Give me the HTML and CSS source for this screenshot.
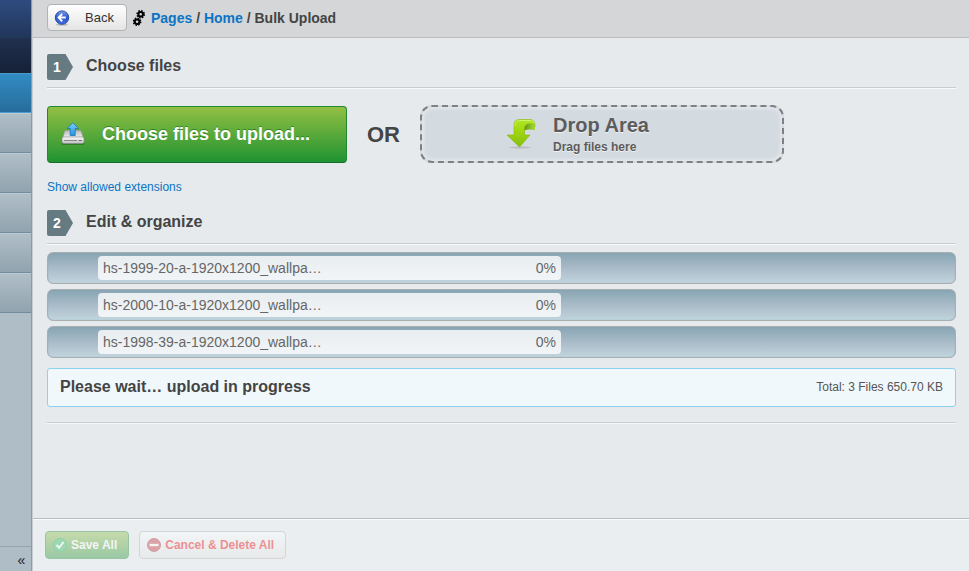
FILE: index.html
```html
<!DOCTYPE html>
<html lang="en">
<head>
<meta charset="utf-8">
<title>Bulk Upload</title>
<link rel="stylesheet" href="styles.css">
</head>
<body>
<div class="app">
  <nav class="sidebar" aria-label="Main">
    <div class="brand"></div>
    <div class="account"></div>
    <a class="nav-item active" href="#" aria-label="Section 1"></a>
    <a class="nav-item" href="#" aria-label="Section 2"></a>
    <a class="nav-item" href="#" aria-label="Section 3"></a>
    <a class="nav-item" href="#" aria-label="Section 4"></a>
    <a class="nav-item" href="#" aria-label="Section 5"></a>
    <a class="nav-item" href="#" aria-label="Section 6"></a>
    <button class="collapse" type="button">«</button>
  </nav>
  <div class="page">
    <header class="topbar">
      <button class="button back" type="button">
        <svg width="16" height="16" viewBox="0 0 16 16" aria-hidden="true">
          <defs><linearGradient id="blue" x1="0" y1="0" x2="0" y2="1"><stop offset="0" stop-color="#7da0ee"/><stop offset=".5" stop-color="#2c57c8"/><stop offset="1" stop-color="#456fe0"/></linearGradient></defs>
          <ellipse cx="8" cy="14.5" rx="6" ry="1.3" fill="#000" opacity=".2"/>
          <circle cx="8" cy="7.6" r="6.7" fill="url(#blue)" stroke="#2a49ad"/>
          <path d="M8.2 4 4.6 7.6l3.6 3.6M5 7.6h6.8" fill="none" stroke="#fff" stroke-width="2"/>
        </svg>
        <span>Back</span>
      </button>
      <svg class="gears" width="12" height="16" viewBox="0 0 12 16" aria-hidden="true">
        <g fill="none" stroke="#000">
          <circle cx="7.7" cy="4.3" r="2.3" stroke-width="2"/>
          <circle cx="7.7" cy="4.3" r="3.6" stroke-width="1.5" stroke-dasharray="1.5 1.33"/>
          <circle cx="4.1" cy="11.7" r="2.3" stroke-width="2"/>
          <circle cx="4.1" cy="11.7" r="3.6" stroke-width="1.5" stroke-dasharray="1.5 1.33"/>
        </g>
      </svg>
      <div class="crumbs"><a href="#">Pages</a> / <a href="#">Home</a> / Bulk Upload</div>
    </header>
    <main class="content">
      <h2 class="step">
        <span class="step-no"><svg width="26" height="26" viewBox="0 0 26 26" aria-hidden="true"><path d="M2 0h16.5L26 13l-7.500 13H2a2 2 0 0 1-2-2V2a2 2 0 0 1 2-2z" fill="#667a82"/></svg><b>1</b></span>
        <span>Choose files</span>
      </h2>
      <div class="choose">
        <button class="upload" type="button">
          <svg width="24" height="24" viewBox="0 0 24 24" aria-hidden="true">
            <defs>
              <linearGradient id="tray" x1="0" y1="0" x2="0" y2="1"><stop offset="0" stop-color="#b9babd"/><stop offset="1" stop-color="#f2f2f2"/></linearGradient>
              <linearGradient id="front" x1="0" y1="0" x2="0" y2="1"><stop offset="0" stop-color="#fff"/><stop offset="1" stop-color="#bdbdbf"/></linearGradient>
              <linearGradient id="up" x1="0" y1="0" x2="0" y2="1"><stop offset="0" stop-color="#7fd0ff"/><stop offset="1" stop-color="#2493e0"/></linearGradient>
            </defs>
            <path d="M2 21.500h20" stroke="#164d17" stroke-width="3" stroke-linecap="round" opacity=".4"/>
            <path d="M5 8.500h14q1 0 1.300 1l2 6.500H1.700l2-6.500q.3-1 1.300-1z" fill="url(#tray)" stroke="#9a9a9a" stroke-width=".7"/>
            <rect x="1" y="15" width="22" height="6.500" rx="1.800" fill="url(#front)" stroke="#8d8d8d" stroke-width=".7"/>
            <path d="M3 18.500h13" stroke="#8a8a8a"/><path d="M17.500 18.500h3.500" stroke="#777"/>
            <path d="M11.800.8 6 6.500h3.200v7h5v-7h3.300z" fill="url(#up)" stroke="#1676b8" stroke-width=".8"/>
          </svg>
          <span>Choose files to upload...</span>
        </button>
        <div class="or">OR</div>
        <div class="drop">
          <svg width="32" height="32" viewBox="0 0 32 32" aria-hidden="true">
            <defs>
              <linearGradient id="green" x1="0" y1="0" x2="0" y2="1"><stop offset="0" stop-color="#b1e829"/><stop offset=".4" stop-color="#a1d70c"/><stop offset="1" stop-color="#86bd12"/></linearGradient>
              <linearGradient id="fold" x1="0" y1="0" x2="1" y2="0"><stop offset="0" stop-color="#5d8f0c"/><stop offset="1" stop-color="#a9dd3c"/></linearGradient>
            </defs>
            <ellipse cx="15" cy="29.500" rx="11" ry="1.200" fill="#000" opacity=".12"/>
            <path d="M18.500 13V8l4-4 6 1.500 1.500 3v3.700c-3-1-8-1.300-11.500.8z" fill="url(#fold)"/>
            <path d="M9 17V7c0-3.500 2-5.500 5.500-5.500H25c3.300 0 5 2.500 5 7-1.500-2.200-3.300-2.800-5.500-2.800-3.500 0-5 2-5 5.300v6h5.500L14.500 29 2 17z" fill="url(#green)" stroke="#86b80e" stroke-width=".6"/>
            <path d="M10 8c0-4 1.800-5.500 4.800-5.500H25c2 0 3.200.8 4 2.500" fill="none" stroke="#ccf56a"/>
          </svg>
          <div>
            <div class="drop-title">Drop Area</div>
            <div class="drop-note">Drag files here</div>
          </div>
        </div>
      </div>
      <a class="extensions" href="#">Show allowed extensions</a>
      <h2 class="step second">
        <span class="step-no"><svg width="26" height="26" viewBox="0 0 26 26" aria-hidden="true"><path d="M2 0h16.500L26 13l-7.500 13H2a2 2 0 0 1-2-2V2a2 2 0 0 1 2-2z" fill="#667a82"/></svg><b>2</b></span>
        <span>Edit &amp; organize</span>
      </h2>
      <ul class="files">
        <li><div class="progress"><span>hs-1999-20-a-1920x1200_wallpa…</span><span>0%</span></div></li>
        <li><div class="progress"><span>hs-2000-10-a-1920x1200_wallpa…</span><span>0%</span></div></li>
        <li><div class="progress"><span>hs-1998-39-a-1920x1200_wallpa…</span><span>0%</span></div></li>
      </ul>
      <div class="status">
        <strong>Please wait… upload in progress</strong>
        <span>Total: 3 Files 650.70 KB</span>
      </div>
      <hr>
    </main>
    <footer class="actions">
      <button class="button save" type="button" disabled>
        <svg width="14" height="14" viewBox="0 0 14 14" aria-hidden="true"><circle cx="7" cy="7" r="6.500" fill="#27bd52" stroke="#169841"/><path d="m3.500 7 2.600 2.800L10.500 4" fill="none" stroke="#fff" stroke-width="2"/></svg>
        Save All
      </button>
      <button class="button cancel" type="button" disabled>
        <svg width="14" height="14" viewBox="0 0 14 14" aria-hidden="true"><circle cx="7" cy="7" r="6.500" fill="#c8303a" stroke="#a0303a"/><path d="M2.500 7h9" stroke="#fff" stroke-width="2.400"/></svg>
        Cancel &amp; Delete All
      </button>
    </footer>
  </div>
</div>
</body>
</html>
```
FILE: styles.css
```css
* { box-sizing: border-box; }
body {
  margin: 0;
  font: 12px/16px "Liberation Sans", Arial, sans-serif;
  color: #444;
  background: #e6eaed;
}
a { color: #0b74c4; text-decoration: none; }
button { font: inherit; cursor: pointer; }
.app { display: flex; min-height: 100vh; }

.sidebar {
  display: flex;
  flex-direction: column;
  flex: none;
  width: 33px;
  background: #afbdc7;
  border-right: 1px solid #c9cdd1;
  box-shadow: inset -1px 0 #93999e;
  padding-right: 1px;
}
.brand { height: 38px; background: linear-gradient(#2f4b7e, #22365c); border-bottom: 1px solid #1c3c52; }
.account { height: 35px; background: linear-gradient(#20304f, #162137); }
.nav-item {
  height: 40px;
  background: linear-gradient(#b0bec8, #91a3af);
  border-top: 1px solid #bccad3;
  border-bottom: 1px solid #708c9d;
}
.nav-item.active { background: linear-gradient(#328bc3, #266d9b); border-color: #4b9bcb #1d5b84; }
.collapse {
  height: 25px;
  margin-top: auto;
  padding: 2px 0 0 12px;
  border: 0;
  border-top: 1px solid #93a5b1;
  background: none;
  color: #222;
  font-size: 14px;
  line-height: 16px;
}

.page { display: flex; flex-direction: column; flex: 1; min-width: 0; }
.topbar {
  display: flex;
  align-items: center;
  height: 38px;
  padding: 0 14px 2px;
  background: #d5d6d8;
  border-bottom: 1px solid #b9bcbf;
}
.button {
  display: flex;
  align-items: center;
  border: 1px solid #b3b3b3;
  border-radius: 4px;
  background: linear-gradient(#fff, #e4e4e4);
}
.back { width: 80px; height: 27px; padding: 0 12px 0 6px; justify-content: space-between; color: #333; font-size: 13px; }
.gears { margin: 0 6px; }
.crumbs { font-size: 14px; font-weight: bold; }

.content { flex: 1; padding: 14px 13px 0 14px; }
.step {
  display: flex;
  gap: 13px;
  margin: 0 0 17px;
  padding-bottom: 7px;
  border-bottom: 1px solid #c8cdd0;
  box-shadow: 0 1px #f8fafa;
  font-size: 16px;
  line-height: 28px;
  height: 36px;
  align-items: flex-start;
}
.step-no { display: grid; height: 28px; padding-top: 2px; color: #fff; font-size: 14px; line-height: 26px; }
.step-no svg, .step-no b { grid-area: 1 / 1; }
.step-no b { padding-left: 6px; }
.choose { display: flex; align-items: center; }
.upload {
  display: flex;
  align-items: center;
  gap: 17px;
  width: 300px;
  height: 57px;
  padding: 0 13px;
  border: 1px solid #1e8a30;
  border-bottom-color: #176d2d;
  border-radius: 4px;
  background: linear-gradient(#92bf43, #209332);
  color: #fff;
  font-size: 18px;
  font-weight: bold;
  text-shadow: 0 -1px rgba(0, 90, 0, .5);
}
.or { padding: 2px 20px 0; font-size: 22px; line-height: 26px; font-weight: bold; }
.drop {
  display: flex;
  align-items: center;
  justify-content: center;
  gap: 16px;
  width: 364px;
  height: 58px;
  padding: 0 50px 0 0;
  border: 2px dashed #808080;
  border-radius: 12px;
  background: #d3dae0;
  box-shadow: inset 0 0 4px 1px #e9edf0;
  color: #5c5c5c;
  text-shadow: 0 1px #eef2f4;
  font-weight: bold;
}
.drop-title { padding-top: 2px; font-size: 20px; line-height: 24px; }
.drop-note { line-height: 20px; }
.extensions { display: block; margin-top: 16px; }
.second { margin: 13px 0 8px; }
.files { display: grid; gap: 5px; margin: 0; padding: 0; list-style: none; }
.files li {
  height: 32px;
  padding: 3px 0 0 50px;
  border: 1px solid #a9aeb1;
  border-radius: 6px;
  background: linear-gradient(#88a5b3, #a9bbc8 50%, #c1d5dd);
  box-shadow: inset 0 0 1px #7aa6c0;
}
.progress {
  display: flex;
  justify-content: space-between;
  width: 463px;
  padding: 0 5px;
  border-radius: 4px;
  background: linear-gradient(#e8edf0, #f2f5f7);
  color: #666;
  font-size: 14px;
  line-height: 24px;
}
.status {
  display: flex;
  align-items: center;
  justify-content: space-between;
  height: 39px;
  margin-top: 10px;
  padding: 0 12px 2px;
  border: 1px solid #8ed0f0;
  border-radius: 3px;
  background: #f0f8fb;
}
.status strong { font-size: 16px; }
.status span { color: #555; }
hr { margin: 15px 0 0; border: 0; height: 2px; background: #f5f7f8; border-top: 1px solid #c8cdd0; }
.actions {
  display: flex;
  gap: 10px;
  height: 53px;
  padding: 12px;
  border-top: 1px solid #b9bcbf;
  box-shadow: inset 0 1px #f8fafb;
  background: #eaeef1;
}
.actions .button { height: 28px; gap: 4px; padding: 0 11px 0 7px; font-weight: bold; opacity: .4; }
.save { border-color: #1e8a30; background: linear-gradient(#92bf43, #209332); color: #fff; }
.actions .cancel { color: #f00000; }
```
